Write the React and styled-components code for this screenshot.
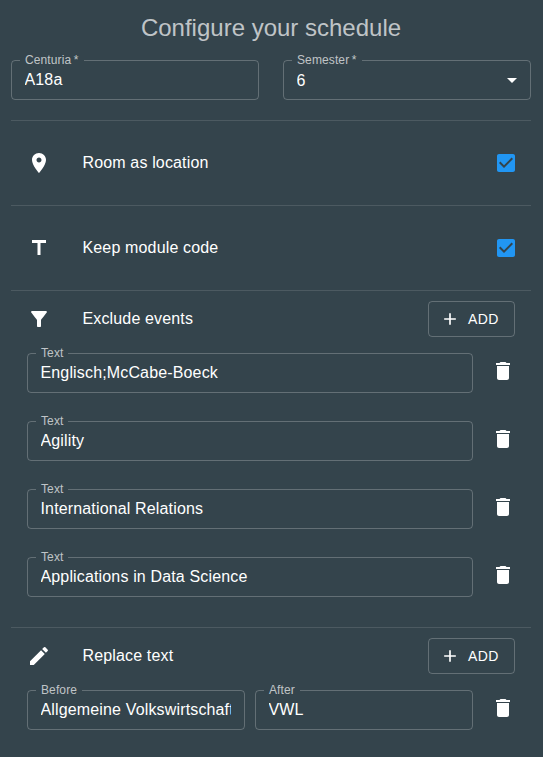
import React from "react";
import styled, { createGlobalStyle } from "styled-components";

const GlobalStyle = createGlobalStyle`
  *, *::before, *::after { box-sizing: border-box; }
  body {
    margin: 0;
    background: #34444c;
    color: #fff;
    font-family: "Liberation Sans", Arial, sans-serif;
    font-size: 16px;
    letter-spacing: 0.15px;
  }
`;

const Page = styled.main`
  min-height: 757px;
  padding: 12px 12px 0 11px;
`;

const Title = styled.h1`
  margin: 0 0 16px;
  font-size: 24px;
  font-weight: 400;
  line-height: 32px;
  letter-spacing: 0;
  text-align: center;
  color: rgba(255, 255, 255, 0.7);
`;

const TopFields = styled.div`
  display: grid;
  grid-template-columns: 1fr 1fr;
  gap: 24px;
  margin-bottom: 20px;
`;

const Section = styled.section`
  border-top: 1px solid rgba(255, 255, 255, 0.12);
  padding: ${(p) => (p.$editable ? "10px 16px 0" : "0 13px 0 16px")};
  height: ${(p) => p.$height};
`;

const Header = styled.div`
  display: flex;
  align-items: center;
  height: ${(p) => p.$height};
`;

const IconSlot = styled.div`
  display: flex;
  flex: 0 0 55.5px;
`;

const HeaderText = styled.div`
  flex: 1;
  line-height: 24px;
`;

const Icon = styled.svg.attrs({ viewBox: "0 0 24 24" })`
  display: block;
  flex: none;
  width: ${(p) => p.$size || 24}px;
  height: ${(p) => p.$size || 24}px;
  fill: ${(p) => p.$color || "#fff"};
`;

const AddButton = styled.button`
  display: flex;
  align-items: center;
  gap: 8px;
  width: 87px;
  height: 36px;
  padding: 0 11px;
  border: 1px solid rgba(255, 255, 255, 0.23);
  border-radius: 4px;
  background: none;
  color: #fff;
  font: 400 14px/24px "Liberation Sans", Arial, sans-serif;
  letter-spacing: 0.4px;
`;

const Rows = styled.div`
  display: flex;
  flex-direction: column;
  gap: 28px;
  padding-top: 16px;
`;

const Row = styled.div`
  display: flex;
  align-items: flex-start;
  justify-content: space-between;
`;

const RowFields = styled.div`
  display: flex;
  gap: 10px;
  width: 446px;
`;

const DeleteButton = styled.button`
  display: flex;
  margin-top: 6px;
  padding: 0;
  border: 0;
  background: none;
`;

const Outline = styled.fieldset`
  flex: 1;
  min-width: 0;
  height: 46px;
  margin: -6px 0 0;
  padding: 0 13px 0 8px;
  border: 1px solid rgba(255, 255, 255, 0.23);
  border-radius: 4px;
`;

const Label = styled.legend`
  padding: 0 5px;
  font-size: 12px;
  line-height: 13px;
  letter-spacing: 0.11px;
  color: rgba(255, 255, 255, 0.7);
`;

const Value = styled.div`
  display: flex;
  align-items: center;
  justify-content: space-between;
  margin: ${(p) => (p.$select ? "1px -7px 0 4.5px" : "1px 0 0 4.5px")};
  height: 24px;
  white-space: nowrap;
  overflow: hidden;
`;

const paths = {
  place: "M12 2C8.13 2 5 5.13 5 9c0 5.25 7 13 7 13s7-7.75 7-13c0-3.87-3.13-7-7-7zm0 9.5c-1.38 0-2.5-1.12-2.5-2.5s1.12-2.5 2.5-2.5 2.5 1.12 2.5 2.5-1.12 2.5-2.5 2.5z",
  title: "M5 4v3h5.5v12h3V7H19V4z",
  filter: "M4.25 5.61C6.27 8.2 10 13 10 13v6c0 .55.45 1 1 1h2c.55 0 1-.45 1-1v-6s3.72-4.8 5.74-7.39c.51-.66.04-1.61-.79-1.61H5.04c-.83 0-1.3.95-.79 1.61z",
  edit: "M3 17.25V21h3.75L17.81 9.94l-3.75-3.75L3 17.25zM20.71 7.04c.39-.39.39-1.02 0-1.41l-2.34-2.34a.9959.9959 0 0 0-1.41 0l-1.83 1.83 3.75 3.75 1.83-1.83z",
  add: "M19 13h-6v6h-2v-6H5v-2h6V5h2v6h6v2z",
  trash: "M6 19c0 1.1.9 2 2 2h8c1.1 0 2-.9 2-2V7H6v12zM19 4h-3.5l-1-1h-5l-1 1H5v2h14V4z",
  check: "M19 3H5c-1.11 0-2 .9-2 2v14c0 1.1.89 2 2 2h14c1.11 0 2-.9 2-2V5c0-1.1-.89-2-2-2zm-9 14l-5-5 1.41-1.41L10 14.17l7.59-7.59L19 8l-9 9z",
  arrow: "M7 10l5 5 5-5z",
};

const Glyph = ({ name, size, color }) => (
  <Icon $size={size} $color={color} aria-hidden="true">
    <path d={paths[name]} />
  </Icon>
);

const SelectValue = styled.span`
  padding-top: 2px;
`;

const Field = ({ label, value, select }) => (
  <Outline>
    <Label>{label}</Label>
    <Value $select={select}>
      {select ? <SelectValue>{value}</SelectValue> : value}
      {select && <Glyph name="arrow" />}
    </Value>
  </Outline>
);

const Option = ({ icon, text }) => (
  <Section $height="85px">
    <Header $height="84px">
      <IconSlot><Glyph name={icon} /></IconSlot>
      <HeaderText>{text}</HeaderText>
      <Glyph name="check" color="#2196f3" />
    </Header>
  </Section>
);

const EditableSection = ({ icon, text, height, rows }) => (
  <Section $editable $height={height}>
    <Header $height="36px">
      <IconSlot><Glyph name={icon} /></IconSlot>
      <HeaderText>{text}</HeaderText>
      <AddButton><Glyph name="add" size={20} />ADD</AddButton>
    </Header>
    <Rows>
      {rows.map((fields, i) => (
        <Row key={i}>
          <RowFields>
            {fields.map(([label, value]) => (
              <Field key={label} label={label} value={value} />
            ))}
          </RowFields>
          <DeleteButton aria-label="Delete"><Glyph name="trash" /></DeleteButton>
        </Row>
      ))}
    </Rows>
  </Section>
);

const excluded = [
  "Englisch;McCabe-Boeck",
  "Agility",
  "International Relations",
  "Applications in Data Science",
];

export default function App() {
  return (
    <Page>
      <GlobalStyle />
      <Title>Configure your schedule</Title>
      <TopFields>
        <Field label={"Centuria\u2009*"} value="A18a" />
        <Field label={"Semester\u2009*"} value="6" select />
      </TopFields>
      <Option icon="place" text="Room as location" />
      <Option icon="title" text="Keep module code" />
      <EditableSection
        icon="filter"
        text="Exclude events"
        height="337px"
        rows={excluded.map((value) => [["Text", value]])}
      />
      <EditableSection
        icon="edit"
        text="Replace text"
        height="129px"
        rows={[[["Before", "Allgemeine Volkswirtschaft"], ["After", "VWL"]]]}
      />
    </Page>
  );
}
